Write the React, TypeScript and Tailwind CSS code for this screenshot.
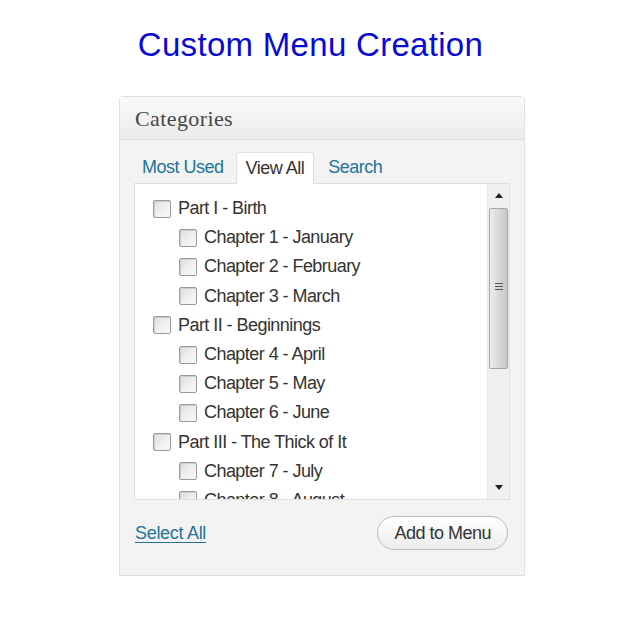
const ITEMS: { label: string; child?: boolean }[] = [
  { label: 'Part I - Birth' },
  { label: 'Chapter 1 - January', child: true },
  { label: 'Chapter 2 - February', child: true },
  { label: 'Chapter 3 - March', child: true },
  { label: 'Part II - Beginnings' },
  { label: 'Chapter 4 - April', child: true },
  { label: 'Chapter 5 - May', child: true },
  { label: 'Chapter 6 - June', child: true },
  { label: 'Part III - The Thick of It' },
  { label: 'Chapter 7 - July', child: true },
  { label: 'Chapter 8 - August', child: true },
];

const SANS = "font-['Liberation_Sans',Arial,sans-serif]";

function Checkbox() {
  return (
    <span className="h-[18px] w-[18px] shrink-0 rounded-[2px] border border-[#9a9a9a] bg-gradient-to-br from-[#dcdcdc] via-[#eeeeee] to-[#fafafa] shadow-[inset_1px_1px_0_#cfcfcf]" />
  );
}

function Scrollbar() {
  return (
    <div className="flex w-[22px] shrink-0 flex-col items-center border-l border-[#e8e8e8] bg-[#f0f0f0]">
      <div className="flex h-[22px] w-full items-center justify-center">
        <span className="h-0 w-0 border-x-[4px] border-b-[5px] border-x-transparent border-b-[#222]" />
      </div>
      <div className="relative mt-[2px] h-[161px] w-[19px] rounded-[2px] border border-[#a6a6a6] bg-gradient-to-r from-[#eeeeee] via-[#d9d9d9] to-[#c8c8c8]">
        <div className="absolute left-[5px] top-[74px] flex flex-col gap-[2px]">
          <span className="h-px w-[8px] bg-[#555]" />
          <span className="h-px w-[8px] bg-[#555]" />
          <span className="h-px w-[8px] bg-[#555]" />
        </div>
      </div>
      <div className="flex-1" />
      <div className="flex h-[24px] w-full items-center justify-center">
        <span className="h-0 w-0 border-x-[4px] border-t-[5px] border-x-transparent border-t-[#222]" />
      </div>
    </div>
  );
}

export default function App() {
  return (
    <div className={`h-[623px] w-[621px] overflow-hidden bg-white ${SANS}`}>
      <h1 className="pt-[27px] text-center text-[33px] leading-[36px] tracking-[0.3px] text-[#0a0ad2]">
        Custom Menu Creation
      </h1>

      <div className="ml-[119px] mt-[33px] h-[480px] w-[406px] rounded-t-[4px] border border-[#dfdfdf] bg-[#f3f3f3]">
        {/* header */}
        <div className="flex h-[43px] items-center border-b border-[#dfdfdf] bg-gradient-to-b from-[#f9f9f9] to-[#ececec] px-[15px]">
          <span className="font-['Liberation_Serif',Georgia,serif] text-[22px] tracking-[0.4px] text-[#464646]">
            Categories
          </span>
        </div>

        {/* tabs */}
        <div className="mt-[12px] flex items-end px-[14px] text-[18px] leading-[24px] tracking-[-0.5px]">
          <span className="px-[8px] pb-[4px] text-[#21759b]">Most Used</span>
          <span className="relative -mb-px ml-[4px] rounded-t-[3px] border border-b-0 border-[#dfdfdf] bg-white px-[9px] pb-[4px] pt-[3px] text-[#333]">
            View All
          </span>
          <span className="ml-[6px] px-[8px] pb-[4px] text-[#21759b]">Search</span>
        </div>

        {/* list */}
        <div className="mx-[14px] flex h-[317px] border border-[#dfdfdf] bg-white">
          <div className="flex-1 overflow-hidden pl-[18px] pt-[10px]">
            {ITEMS.map((it) => (
              <div
                key={it.label}
                className={`flex h-[29.2px] items-center gap-[7px] text-[18px] tracking-[-0.55px] text-[#333] ${it.child ? 'pl-[26px]' : ''}`}
              >
                <Checkbox />
                <span className="whitespace-nowrap">{it.label}</span>
              </div>
            ))}
          </div>
          <Scrollbar />
        </div>

        {/* footer */}
        <div className="mt-[16px] flex items-center justify-between pl-[15px] pr-[16px]">
          <span className="text-[18px] tracking-[-0.3px] text-[#21759b] underline underline-offset-[3px]">
            Select All
          </span>
          <button className="h-[34px] rounded-full border border-[#bbbbbb] bg-gradient-to-b from-white to-[#ededed] px-[16px] text-[18px] tracking-[-0.5px] text-[#333]">
            Add to Menu
          </button>
        </div>
      </div>
    </div>
  );
}
